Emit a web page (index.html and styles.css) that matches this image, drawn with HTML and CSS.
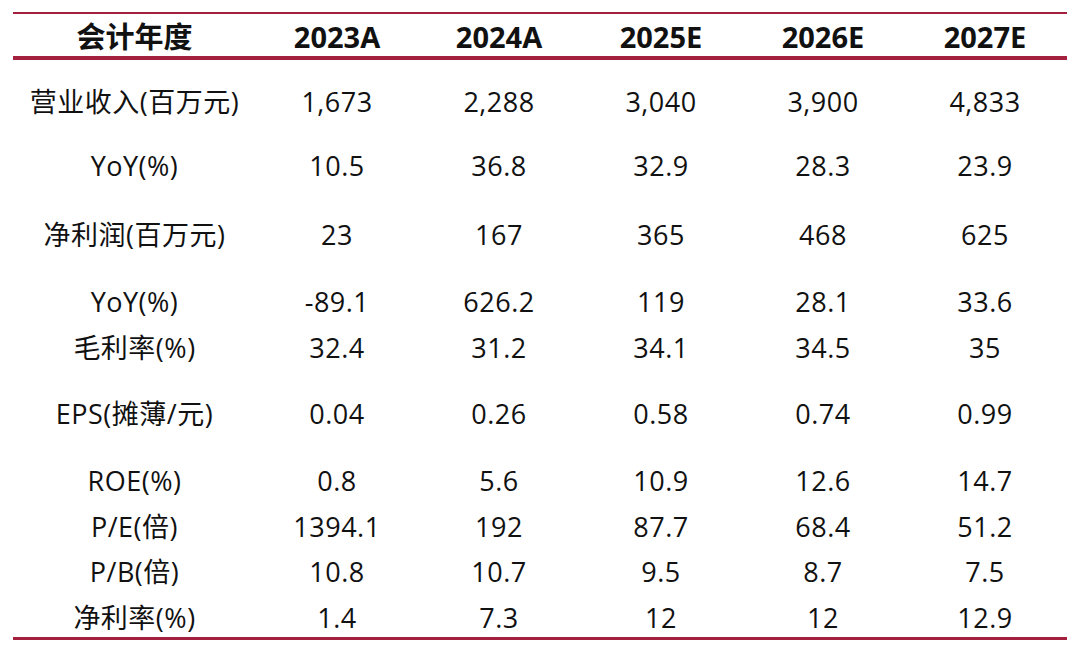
FILE: index.html
```html
<!DOCTYPE html>
<html lang="zh-CN">
<head>
<meta charset="utf-8">
<title>财务预测</title>
<link rel="stylesheet" href="styles.css">
</head>
<body>
<div class="sheet">
  <div class="head">
    <div class="cell">会计年度</div>
    <div class="cell">2023A</div>
    <div class="cell">2024A</div>
    <div class="cell">2025E</div>
    <div class="cell">2026E</div>
    <div class="cell">2027E</div>
  </div>
  <div class="body">
    <div class="cell">营业收入(百万元)</div><div class="cell">1,673</div><div class="cell">2,288</div><div class="cell">3,040</div><div class="cell">3,900</div><div class="cell">4,833</div>
    <div class="cell">YoY(%)</div><div class="cell">10.5</div><div class="cell">36.8</div><div class="cell">32.9</div><div class="cell">28.3</div><div class="cell">23.9</div>
    <div class="cell">净利润(百万元)</div><div class="cell">23</div><div class="cell">167</div><div class="cell">365</div><div class="cell">468</div><div class="cell">625</div>
    <div class="cell">YoY(%)</div><div class="cell">-89.1</div><div class="cell">626.2</div><div class="cell">119</div><div class="cell">28.1</div><div class="cell">33.6</div>
    <div class="cell">毛利率(%)</div><div class="cell">32.4</div><div class="cell">31.2</div><div class="cell">34.1</div><div class="cell">34.5</div><div class="cell">35</div>
    <div class="cell">EPS(摊薄/元)</div><div class="cell">0.04</div><div class="cell">0.26</div><div class="cell">0.58</div><div class="cell">0.74</div><div class="cell">0.99</div>
    <div class="cell">ROE(%)</div><div class="cell">0.8</div><div class="cell">5.6</div><div class="cell">10.9</div><div class="cell">12.6</div><div class="cell">14.7</div>
    <div class="cell">P/E(倍)</div><div class="cell">1394.1</div><div class="cell">192</div><div class="cell">87.7</div><div class="cell">68.4</div><div class="cell">51.2</div>
    <div class="cell">P/B(倍)</div><div class="cell">10.8</div><div class="cell">10.7</div><div class="cell">9.5</div><div class="cell">8.7</div><div class="cell">7.5</div>
    <div class="cell">净利率(%)</div><div class="cell">1.4</div><div class="cell">7.3</div><div class="cell">12</div><div class="cell">12</div><div class="cell">12.9</div>
  </div>
</div>
</body>
</html>
```

FILE: styles.css
```css
html, body {
  margin: 0;
  padding: 0;
  background: #ffffff;
}

body {
  font-family: "Open Sans", "Noto Sans CJK SC", sans-serif;
  color: #111111;
}

.sheet {
  width: 1054px;
  margin: 12px 0 0 13px;
}

.head,
.body {
  display: grid;
  grid-template-columns: 243px repeat(5, 162px);
}

.head {
  border-top: 2px solid #a3213f;
  border-bottom: 4px solid #a3213f;
  height: 42px;
  box-sizing: content-box;
  font-weight: 700;
  font-size: 29px;
}

.head .cell {
  padding-top: 2px;
}

.body {
  grid-template-rows: 82px 46px 92px 42px 50px 82px 52px 40px 51px 40px;
  border-bottom: 3px solid #a3213f;
  font-size: 27px;
  font-weight: 400;
  letter-spacing: 0.5px;
}

.cell {
  display: flex;
  align-items: center;
  justify-content: center;
  line-height: 1;
  white-space: nowrap;
}
```
